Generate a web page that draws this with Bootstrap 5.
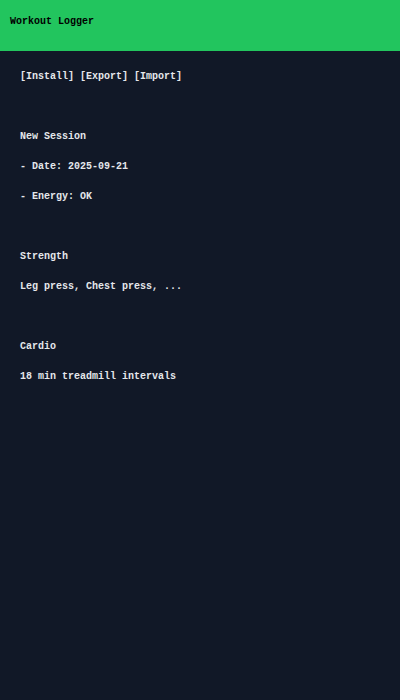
<!DOCTYPE html>
<html lang="en">
<head>
<meta charset="utf-8">
<meta name="viewport" content="width=device-width, initial-scale=1">
<title>Workout Logger</title>
<link href="https://cdn.jsdelivr.net/npm/bootstrap@5.3.0/dist/css/bootstrap.min.css" rel="stylesheet">
<style>
  body {
    background: #111827;
    color: #e5e7eb;
    font-family: "Liberation Mono", "Courier New", monospace;
    font-size: 10px;
    line-height: 30px;
  }
  h1, h2, .tool-link {
    font-size: 10px;
    font-weight: 700;
    line-height: 30px;
  }
  .app-header {
    background: #22c55e;
    color: #000;
    padding: 7px 10px 14px;
  }
  .app-main { padding: 11px 20px; }
  .toolbar { gap: 6px; }
  .tool-link { color: inherit; }
  .log-section { margin-top: 30px; }
</style>
</head>
<body class="min-vh-100 fw-bold">
  <header class="app-header">
    <h1 class="m-0">Workout Logger</h1>
  </header>
  <main class="app-main">
    <div class="toolbar d-flex flex-wrap">
      <button type="button" class="tool-link bg-transparent border-0 p-0">[Install]</button>
      <button type="button" class="tool-link bg-transparent border-0 p-0">[Export]</button>
      <button type="button" class="tool-link bg-transparent border-0 p-0">[Import]</button>
    </div>
    <section class="log-section">
      <h2 class="m-0">New Session</h2>
      <p class="m-0">- Date: 2025-09-21</p>
      <p class="m-0">- Energy: OK</p>
    </section>
    <section class="log-section">
      <h2 class="m-0">Strength</h2>
      <p class="m-0">Leg press, Chest press, ...</p>
    </section>
    <section class="log-section">
      <h2 class="m-0">Cardio</h2>
      <p class="m-0">18 min treadmill intervals</p>
    </section>
  </main>
  <script src="https://cdn.jsdelivr.net/npm/bootstrap@5.3.0/dist/js/bootstrap.bundle.min.js"></script>
</body>
</html>
